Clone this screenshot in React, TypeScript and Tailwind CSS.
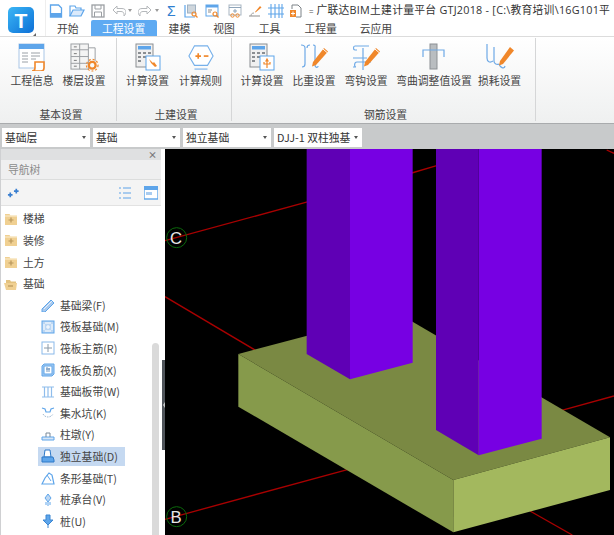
import React from "react";

const F = "font-['Noto_Sans_CJK_SC','Noto_Sans',sans-serif]";
const B = "#5ea5ea";
const O = "#f0872a";
const G = "#9b9fa3";

function Ic({ className, v = 14, children }: { className?: string; v?: number; children: React.ReactNode }) {
  return (
    <svg className={"shrink-0 " + (className ?? "")} viewBox={`0 0 ${v} ${v}`} fill="none" width={v} height={v}>
      {children}
    </svg>
  );
}

function QuickBar() {
  return (
    <div className="flex items-center h-[20px] pt-[1px]">
      <Ic className="ml-[3px]">
        <path d="M1.5 1h8l3 3v9h-11z" stroke={B} strokeWidth="1.3" />
        <path d="M2 9h10v4H2z" fill={B} />
      </Ic>
      <Ic className="ml-[6px]" v={16}>
        <path d="M1 13V3h5l1 2h5v2" stroke={B} strokeWidth="1.2" />
        <path d="M1 13l3-6h11l-3 6z" stroke={B} strokeWidth="1.2" fill="#dbeafb" />
      </Ic>
      <Ic className="ml-[6px]">
        <rect x="1" y="1" width="12" height="12" stroke={G} strokeWidth="1.3" />
        <path d="M4 1v4h6V1M3.5 13V8h7v5" stroke={G} />
      </Ic>
      <Ic className="ml-[7px]">
        <path d="M5 2L1 6l4 4V7.5h4c2 0 3 1.2 3 3V12c1-1 2-2.500 2-4 0-2-1.500-3.500-4-3.500H5z" stroke="#b5b8bb" />
      </Ic>
      <div className="ml-[2px] w-0 h-0 border-x-[2.500px] border-x-transparent border-t-[3px] border-t-[#9a9a9a]" />
      <Ic className="ml-[6px]">
        <path d="M9 2l4 4-4 4V7.500H5c-2 0-3 1.200-3 3V12C1 11 0 9.500 0 8c0-2 1.500-3.500 4-3.500h5z" stroke="#b5b8bb" />
      </Ic>
      <div className="ml-[3px] w-0 h-0 border-x-[2.500px] border-x-transparent border-t-[3px] border-t-[#9a9a9a]" />
      <span className="ml-[8px] w-[10px] text-[14px] leading-none text-[#2f7fd0] font-['Liberation_Sans',sans-serif]">Σ</span>
      <Ic className="ml-[7px]">
        <path d="M1 1v12h10" stroke={B} strokeWidth="1.2" />
        <rect x="3.500" y="1" width="8" height="8" fill="#cfd6dc" stroke="#9fb1c2" />
        <circle cx="10" cy="10" r="2" stroke={O} strokeWidth="1.200" />
        <path d="M11.500 11.500l2 2" stroke={O} strokeWidth="1.200" />
      </Ic>
      <Ic className="ml-[7px]">
        <rect x="1" y="1" width="12" height="11" stroke={B} />
        <path d="M1 1h12v2.500H1z" fill={B} />
        <path d="M3 6h4M3 8h3" stroke="#8b8b8b" />
        <circle cx="10" cy="10" r="2" stroke={O} strokeWidth="1.200" />
        <path d="M11.500 11.500l2 2" stroke={O} strokeWidth="1.200" />
      </Ic>
      <Ic className="ml-[9px]">
        <rect x="1" y="1" width="12" height="10" stroke="#a9b6c2" />
        <path d="M1 3.500h12M7 5v4M5 7h4" stroke="#8fa5ba" />
        <circle cx="4.500" cy="11.500" r="1.700" stroke={O} />
        <circle cx="9.500" cy="11.500" r="1.700" stroke={O} />
      </Ic>
      <Ic className="ml-[6px]">
        <path d="M7 8l5-6 1.500 1.500-6 5z" fill={O} />
        <path d="M1 12h11" stroke="#a0a0a0" strokeWidth="1.200" />
        <path d="M3 12c0-2 1-3 3-3" stroke="#a0a0a0" />
      </Ic>
      <Ic className="ml-[6px]" v={16}>
        <path d="M0 5h16M0 11h16M3 1v14M7 1v14M11 1v14M14 1v14" stroke={B} strokeWidth="1.100" />
      </Ic>
      <Ic className="ml-[5px]">
        <path d="M3 5V1h6l3 3v9H7" stroke="#7d8388" />
        <rect x="1" y="6" width="6" height="7" fill={O} />
        <path d="M4 7.500v4M2 9.500h4" stroke="#fff" />
      </Ic>
      <span className="ml-[6px] text-[8px] leading-none text-[#555]">=</span>
      <span className="ml-[3px] whitespace-nowrap text-[10.800px] leading-none text-[#333] tracking-[0.25px] font-['Open_Sans','Noto_Sans_CJK_SC',sans-serif]">
        广联达BIM土建计量平台 GTJ2018 - [C:\教育培训\16G101平
      </span>
    </div>
  );
}

function Tabs() {
  return (
    <div className={"flex items-stretch h-[16px] text-[10.800px] leading-[16px] text-[#444] whitespace-nowrap " + F}>
      <span className="ml-[11px]">开始</span>
      <span className="ml-[12px] w-[66px] text-center bg-[#5eaaf2] text-white rounded-t-[2px]">工程设置</span>
      <span className="ml-[12px]">建模</span>
      <span className="ml-[23px]">视图</span>
      <span className="ml-[24px]">工具</span>
      <span className="ml-[24px]">工程量</span>
      <span className="ml-[23px]">云应用</span>
    </div>
  );
}

function RibbonBtn({ label, icon, w = "w-[52px]" }: { label: string; icon: React.ReactNode; w?: string }) {
  return (
    <div className={"flex flex-col items-center shrink-0 " + w}>
      <div className="h-[30px] flex items-center justify-center">{icon}</div>
      <div className="text-[10.800px] leading-[16px] text-[#444] whitespace-nowrap">{label}</div>
    </div>
  );
}

function Group({ label, className, children }: { label: string; className: string; children: React.ReactNode }) {
  return (
    <div className={"flex flex-col border-r border-[#d5d6d7] h-[83px] " + className}>
      <div className="flex pt-[4px]">{children}</div>
      <div className="mt-auto mb-[-1px] text-center text-[10.800px] leading-[16px] text-[#444]">{label}</div>
    </div>
  );
}

const Calc = ({ children }: { children: React.ReactNode }) => (
  <Ic v={28} className="w-[28px] h-[28px]">
    <rect x="2" y="1" width="17" height="23" fill="#f0f0f0" stroke="#8a8e92" />
    <rect x="4" y="3" width="13" height="3.500" fill={B} />
    <path d="M4 9h3v2H4zM9 9h3v2H9zM14 9h3v2h-3zM4 13h3v2H4zM4 17h3v2H4zM9 13h3v2H9z" fill="#8a8e92" />
    <rect x="12" y="13" width="14" height="14" fill="#fff" stroke={B} />
    {children}
  </Ic>
);

const PenOverlay = () => (
  <>
    <path d="M14 20L25 6l4 3.500L17 23l-4 1.500z" fill={O} />
    <path d="M24 7l4 3.500" stroke="#fff" strokeWidth="1" />
  </>
);

function RibbonRow() {
  return (
    <div className={"flex h-[87px] pt-[1px] bg-gradient-to-b from-white to-[#eff0f0] border-t border-[#dcdcdc] " + F}>
      <Group label="基本设置" className="w-[117px] pl-[6px]">
        <RibbonBtn
          label="工程信息"
          icon={
            <Ic v={28} className="w-[28px] h-[28px]">
              <rect x="1" y="1" width="25" height="24" fill="#fff" stroke="#a9c6e6" />
              <rect x="1" y="1" width="25" height="5" fill={B} />
              <path d="M4 10h6M4 13h6M4 16h6M4 19h6M13 10h9M13 13h9M13 16h5" stroke="#9aa0a6" />
              <path d="M17 19h9v6c0 2-1 3-3 3h-9c1.500 0 3-1 3-3z" fill="#fff" stroke={O} strokeWidth="1.600" />
            </Ic>
          }
        />
        <RibbonBtn
          label="楼层设置"
          icon={
            <Ic v={30} className="w-[29px] h-[29px]">
              <rect x="1" y="1" width="18" height="26" fill="#f4f4f4" stroke="#9a9ea2" />
              <path d="M1 7h18M1 14h18M1 21h18M10 1v26M19 5h7v14" stroke="#9a9ea2" />
              <path d="M4 4h3M4 11h3M4 18h3M4 24h3" stroke="#777" />
              <circle cx="23" cy="23" r="3.500" stroke={O} strokeWidth="2.400" />
              <circle cx="23" cy="23" r="6" stroke={O} strokeWidth="1.200" strokeDasharray="2 2" />
            </Ic>
          }
        />
      </Group>
      <Group label="土建设置" className="w-[115px] pl-[4px]">
        <RibbonBtn
          label="计算设置"
          w="w-[53px]"
          icon={
            <Calc>
              <path d="M15 16l4 4 1-1 3 4-2 1-4-4z" fill={O} />
            </Calc>
          }
        />
        <RibbonBtn
          label="计算规则"
          w="w-[53px]"
          icon={
            <Ic v={28} className="w-[28px] h-[26px]">
              <path d="M7 2h14l6 11-6 10H7L1 13z" fill="#fff" stroke="#76b0ea" strokeWidth="1.200" />
              <path d="M7 27h14" stroke="#76b0ea" strokeWidth="1.200" />
              <path d="M8 13h6M11 10v6" stroke={O} strokeWidth="1.800" />
              <path d="M17 13h5" stroke={O} strokeWidth="1.800" />
            </Ic>
          }
        />
      </Group>
      <Group label="钢筋设置" className="w-[304px] pl-[4px]">
        <RibbonBtn
          label="计算设置"
          w="w-[52px]"
          icon={
            <Calc>
              <path d="M19 16v9M16 19v2h6v-2M19 16l-1 2h2z" stroke={O} strokeWidth="1.200" />
            </Calc>
          }
        />
        <RibbonBtn
          label="比重设置"
          icon={
            <Ic v={30} className="w-[30px] h-[30px]">
              <path d="M2 3c3 0 4 1 4 3v16c0 2-1 3-3 3M11 3c-2 0-3 1-3 3M14 3c3 0 2 2 2 4v16c0 3 3 3 3 1" stroke="#6ea9e6" strokeWidth="1.200" />
              <PenOverlay />
            </Ic>
          }
        />
        <RibbonBtn
          label="弯钩设置"
          icon={
            <Ic v={30} className="w-[30px] h-[30px]">
              <path d="M18 4H4c-2 0-2 4 0 4h2M2 16h14M2 25h3c-2 0-2-5 1-5h14M12 6v22" stroke="#6ea9e6" strokeWidth="1.200" />
              <PenOverlay />
            </Ic>
          }
        />
        <RibbonBtn
          label="弯曲调整值设置"
          w="w-[84px]"
          icon={
            <Ic v={28} className="w-[28px] h-[28px]">
              <rect x="10" y="1" width="7" height="25" fill="#b9bdc0" stroke="#8c9094" />
              <path d="M3 14V7h21v7" stroke="#6ea9e6" strokeWidth="1.200" />
            </Ic>
          }
        />
        <RibbonBtn
          label="损耗设置"
          w="w-[47px]"
          icon={
            <Ic v={30} className="w-[30px] h-[30px]">
              <path d="M2 2v14c0 4 3 5 6 3M9 5v14c0 3 3 4 5 3M14 22c1 3 5 6 6 2" stroke="#6ea9e6" strokeWidth="1.200" />
              <path d="M15 19L25 5l4 3.500L18 22l-4 1.500z" fill={O} />
            </Ic>
          }
        />
      </Group>
    </div>
  );
}

function Sel({ w, text }: { w: string; text: string }) {
  return (
    <div className={"relative h-[19px] bg-white flex items-center pl-[3px] text-[10.800px] leading-none text-[#333] whitespace-nowrap " + w}>
      {text}
      <div className="absolute right-[4px] top-[8px] w-0 h-0 border-x-[2.500px] border-x-transparent border-t-[3px] border-t-[#555]" />
    </div>
  );
}

function Folder({ open }: { open?: boolean }) {
  return (
    <Ic className="w-[14px] h-[14px]">
      {open ? (
        <>
          <path d="M2 3h4l1 1.500h5V6H2z" fill="#e3c27f" />
          <path d="M0 6h13l-1 7H2z" fill="#f0d092" />
          <path d="M4 9h5" stroke="#b8965a" strokeWidth="1.200" />
        </>
      ) : (
        <>
          <path d="M1 2h4.500l1 1.500H13V13H1z" fill="#f0d092" />
          <path d="M1 4h12" stroke="#fbeed2" />
          <path d="M4.500 8h5M7 5.500v5" stroke="#b8965a" strokeWidth="1.200" />
        </>
      )}
    </Ic>
  );
}

const treeIcons: Record<string, React.ReactNode> = {
  beam: (
    <>
      <path d="M1 11L10 2l3 3-9 9-3 0z" fill="#a8c9ee" stroke={B} strokeWidth="1" />
      <path d="M3 11l8-8" stroke="#fff" strokeWidth=".7" />
    </>
  ),
  raft: (
    <>
      <rect x="1" y="1" width="12" height="12" fill="#bcd7f3" stroke={B} />
      <path d="M4 3h6M4 11h6M3 4v6M11 4v6M7 5v4M5 7h4" stroke="#fff" />
    </>
  ),
  main: (
    <>
      <rect x="1" y="1" width="12" height="12" fill="#fff" stroke="#8ab9ea" />
      <path d="M7 3v8M3 7h8" stroke="#8a9aa8" />
    </>
  ),
  neg: (
    <>
      <path d="M1 3l2-2h10v10l-2 2H1z" fill="#a9ccf0" stroke={B} />
      <rect x="3" y="3" width="8" height="8" fill="#fff" stroke={B} />
      <path d="M5 6h4M6 4v5M8 5v4" stroke="#4f7fae" strokeWidth=".8" />
    </>
  ),
  strip: <path d="M1 2h12M1 12h12M3.500 2v10M7 2v10M10.500 2v10" stroke="#8fbdec" strokeWidth="1.200" />,
  pit: (
    <>
      <path d="M1 2l3 1 1 3h4l1-3 3-1" stroke={B} strokeWidth="1.200" />
      <path d="M2 8c2 4 8 4 10 0" stroke="#9fb8d0" strokeDasharray="1.500 1" />
    </>
  ),
  pier: (
    <>
      <path d="M1 9h12v3H1z" fill="#d7e6f6" stroke={B} />
      <path d="M5 9V5h4v4" stroke="#7b8a99" />
    </>
  ),
  iso: (
    <>
      <path d="M4 1h5l1 7H3z" fill="#fff" stroke="#2d78c8" />
      <path d="M1 8h11l1 3v2H1z" fill="#5ea5ea" stroke="#2d78c8" />
    </>
  ),
  bar: (
    <>
      <path d="M1 13l3-6 4-5 3 2 2 9z" fill="#fff" stroke={B} strokeWidth="1.200" />
      <path d="M6 4l4 6" stroke={B} />
    </>
  ),
  cap: (
    <>
      <path d="M7 1l3 4-3 4-3-4z" fill="#bcd7f3" stroke={B} />
      <path d="M7 9v4M5 9v3M9 9v3" stroke={B} />
    </>
  ),
  pile: <path d="M5 1h4v5h3l-5 5-5-5h3zM7 11v3" fill="#5ea5ea" stroke="#3a86d2" />,
};

function Leaf({ label, icon, active }: { label: string; icon: string; active?: boolean }) {
  return (
    <div className="flex items-center h-[21.600px] pl-[40px] relative">
      {active && <div className="absolute left-[37px] w-[87px] top-[1px] bottom-[1px] bg-[#c5d9f1]" />}
      <Ic className="relative w-[14px] h-[14px]">{treeIcons[icon]}</Ic>
      <span className="relative ml-[5px] whitespace-nowrap">{label}</span>
    </div>
  );
}

function Sidebar() {
  return (
    <aside className={"w-[161px] shrink-0 bg-white flex flex-col overflow-hidden border-l border-[#cfd0d2] " + F}>
      <div className="h-[11px] bg-[#dfe0e1] flex items-center justify-end pr-[4px] text-[9px] leading-none text-[#777] font-bold">
        ×
      </div>
      <div className="h-[20px] bg-[#efeff0] flex items-center pl-[7px] text-[10.800px] text-[#8b8b8b] border-b border-[#dcdddd]">
        导航树
      </div>
      <div className="h-[26px] bg-[#f4f4f4] flex items-center pl-[6px] pr-[3px] border-b border-[#e2e2e2]">
        <Ic className="w-[13px] h-[13px]">
          <path d="M3.500 7v5M1 9.500h5M10 3v5M7.500 5.500h5" stroke="#3a7fd0" strokeWidth="1.800" />
        </Ic>
        <Ic className="ml-auto">
          <path d="M1 2h2M1 7h2M1 12h2M5 2h8M5 7h8M5 12h8" stroke="#8fbdec" strokeWidth="1.600" />
        </Ic>
        <Ic className="ml-[12px]">
          <rect x="0" y="0" width="14" height="13" fill="#fff" stroke={B} strokeWidth="1.400" />
          <rect x="0" y="0" width="14" height="4" fill={B} />
          <path d="M2 6h6v3H2zM2 10h4" fill="#a9ccf0" />
        </Ic>
      </div>
      <div className="relative flex-1 pt-[2px] text-[10.800px] leading-none text-[#444]">
        {["楼梯", "装修", "土方", "基础"].map((t, i) => (
          <div key={t} className="flex items-center h-[21.600px] pl-[3px]">
            <Folder open={i === 3} />
            <span className="ml-[5px]">{t}</span>
          </div>
        ))}
        <Leaf label="基础梁(F)" icon="beam" />
        <Leaf label="筏板基础(M)" icon="raft" />
        <Leaf label="筏板主筋(R)" icon="main" />
        <Leaf label="筏板负筋(X)" icon="neg" />
        <Leaf label="基础板带(W)" icon="strip" />
        <Leaf label="集水坑(K)" icon="pit" />
        <Leaf label="柱墩(Y)" icon="pier" />
        <Leaf label="独立基础(D)" icon="iso" active />
        <Leaf label="条形基础(T)" icon="bar" />
        <Leaf label="桩承台(V)" icon="cap" />
        <Leaf label="桩(U)" icon="pile" />
        <div className="absolute right-[2px] top-[137px] bottom-0 w-[7px] bg-[#dadada] rounded-t-[4px]" />
      </div>
    </aside>
  );
}

function Scene() {
  const red = "#a80000";
  const grid = "#0b6a0b";
  return (
    <svg className="block w-[449px] h-[386px]" viewBox="0 -3 1347 1158">
      <g stroke={red} strokeWidth="4" fill="none">
        <path d="M0 272L430 155" />
        <path d="M740 69L815 47" />
        <path d="M1325 0L1347 10" />
        <path d="M0 440L275 603" />
        <path d="M0 1108L550 958" />
        <path d="M1190 781L1347 738" />
        <path d="M1095 1083L1222 1155" />
      </g>
      <circle cx="35" cy="263" r="30" fill="none" stroke={grid} strokeWidth="3" />
      <circle cx="35" cy="1100" r="30" fill="none" stroke={grid} strokeWidth="3" />
      <text x="33" y="281" textAnchor="middle" fontSize="50" fill="#e6e6e6" fontFamily="Liberation Sans, sans-serif">C</text>
      <text x="33" y="1118" textAnchor="middle" fontSize="50" fill="#e6e6e6" fontFamily="Liberation Sans, sans-serif">B</text>
      <path d="M220 612L694 487L1335 862L865 990z" fill="#7a8943" />
      <path d="M220 612L865 990V1147L220 770z" fill="#869a4b" />
      <path d="M865 990L1335 862V1020L865 1147z" fill="#a3b85e" />
      <path d="M425 -5H555V688L425 612z" fill="#5f00b5" />
      <path d="M555 -5H743V638L555 688z" fill="#7700e3" />
      <path d="M813 -5H941V916L813 840z" fill="#5f00b5" />
      <path d="M941 -5H1130V866L941 916z" fill="#7700e3" />
    </svg>
  );
}

export default function App() {
  return (
    <div className={"w-[614px] h-[535px] overflow-hidden flex flex-col bg-white " + F}>
      <header className="flex h-[36px] shrink-0 bg-white">
        <div className="relative w-[45px] shrink-0">
          <div className="absolute left-[8px] top-[7px] w-[26px] h-[26px] rounded-[5px] bg-gradient-to-br from-[#3bb6f5] to-[#0f6fd6] flex items-center justify-center text-white text-[21px] font-bold leading-none font-['Liberation_Sans',sans-serif]">
            T
          </div>
          <div className="absolute left-[33px] top-[33px] w-0 h-0 border-l-[3px] border-l-transparent border-b-[3px] border-b-[#666]" />
        </div>
        <div className="flex-1 min-w-0 flex flex-col border-l border-[#eeeeee]">
          <QuickBar />
          <Tabs />
        </div>
      </header>
      <RibbonRow />
      <div className="h-[26px] shrink-0 bg-[#c8cacb] border-t border-[#a9abad] flex items-center pl-[2px] gap-[3px] pt-[1px]">
        <Sel w="w-[88px]" text="基础层" />
        <Sel w="w-[87px]" text="基础" />
        <Sel w="w-[88px]" text="独立基础" />
        <Sel w="w-[88px]" text="DJJ-1 双柱独基" />
      </div>
      <div className="flex-1 min-h-0 flex">
        <Sidebar />
        <div className="relative w-[4px] shrink-0 bg-white">
          <div className="absolute left-[1px] right-0 top-[211px] h-[90px] bg-[#4f545a]">
            <div className="absolute left-[1px] top-[42px] w-0 h-0 border-y-[3px] border-y-transparent border-r-[2px] border-r-[#c5c7c9]" />
          </div>
        </div>
        <main className="flex-1 bg-black overflow-hidden">
          <Scene />
        </main>
      </div>
    </div>
  );
}
